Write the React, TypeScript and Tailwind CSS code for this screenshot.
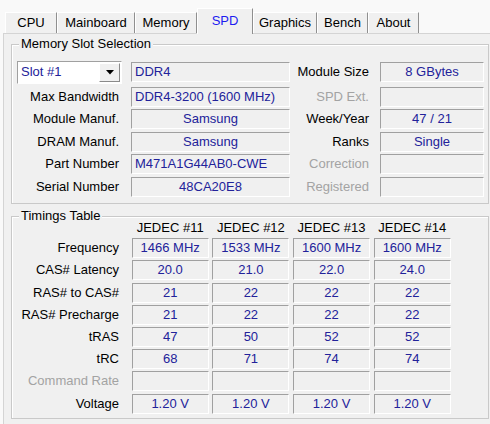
import React from 'react';

const font = { fontFamily: '"Liberation Sans", Arial, sans-serif' };

const tabs = [
  { name: 'CPU', w: 'w-[52px]' },
  { name: 'Mainboard', w: 'w-[78px]' },
  { name: 'Memory', w: 'w-[62px]' },
  { name: 'SPD', w: 'w-[56px]', active: true },
  { name: 'Graphics', w: 'w-[64px]' },
  { name: 'Bench', w: 'w-[51px]' },
  { name: 'About', w: 'w-[51px]' },
];

// sunken value box, CPU-Z style
const Field: React.FC<{ value?: string; align?: 'left' | 'center'; className?: string }> = ({
  value = '',
  align = 'center',
  className = '',
}) => (
  <div
    className={`h-[20px] border border-t-[#a0a0a0] border-l-[#a0a0a0] border-b-white border-r-white bg-[#f0f0f0] text-[13px] leading-[18px] text-[#22229a] whitespace-nowrap overflow-hidden ${
      align === 'left' ? 'text-left pl-[3px]' : 'text-center'
    } ${className}`}
  >
    {value}
  </div>
);

const Label: React.FC<{ text: string; disabled?: boolean; className?: string }> = ({
  text,
  disabled = false,
  className = '',
}) => (
  <div
    className={`h-[20px] text-right text-[13px] leading-[20px] whitespace-nowrap ${
      disabled ? 'text-[#a3a3a3]' : 'text-black'
    } ${className}`}
  >
    {text}
  </div>
);

const GroupBox: React.FC<{ title: string; className?: string; children: React.ReactNode }> = ({
  title,
  className = '',
  children,
}) => (
  <div className={`relative border border-[#c9c9c9] shadow-[inset_1px_1px_0_#ffffff] ${className}`}>
    <span className="absolute -top-[9px] left-[7px] bg-[#f0f0f0] px-[2px] text-[13px] leading-[16px] text-black">
      {title}
    </span>
    {children}
  </div>
);

const slotRows: [string, string, 'left' | 'center', string, string, boolean][] = [
  ['Max Bandwidth', 'DDR4-3200 (1600 MHz)', 'left', 'SPD Ext.', '', true],
  ['Module Manuf.', 'Samsung', 'center', 'Week/Year', '47 / 21', false],
  ['DRAM Manuf.', 'Samsung', 'center', 'Ranks', 'Single', false],
  ['Part Number', 'M471A1G44AB0-CWE', 'left', 'Correction', '', true],
  ['Serial Number', '48CA20E8', 'center', 'Registered', '', true],
];

const timings: { label: string; values: string[]; disabled?: boolean }[] = [
  { label: 'Frequency', values: ['1466 MHz', '1533 MHz', '1600 MHz', '1600 MHz'] },
  { label: 'CAS# Latency', values: ['20.0', '21.0', '22.0', '24.0'] },
  { label: 'RAS# to CAS#', values: ['21', '22', '22', '22'] },
  { label: 'RAS# Precharge', values: ['21', '22', '22', '22'] },
  { label: 'tRAS', values: ['47', '50', '52', '52'] },
  { label: 'tRC', values: ['68', '71', '74', '74'] },
  { label: 'Command Rate', values: ['', '', '', ''], disabled: true },
  { label: 'Voltage', values: ['1.20 V', '1.20 V', '1.20 V', '1.20 V'] },
];

export default function App() {
  return (
    <div className="w-[490px] h-[424px] overflow-hidden bg-[#f9f9f9]" style={font}>
      {/* tab strip */}
      <div className="flex items-end h-[33px] pl-[5px]">
        {tabs.map((t) =>
          t.active ? (
            <div
              key={t.name}
              className={`${t.w} h-[26px] -mb-px relative z-10 bg-[#f0f0f0] border border-b-0 border-l-white border-t-white border-r-[#8f8f8f] text-center text-[13px] leading-[24px] text-[#1c1cf0]`}
            >
              {t.name}
            </div>
          ) : (
            <div
              key={t.name}
              className={`${t.w} h-[21px] bg-[#f0f0f0] border-l border-r border-t border-l-white border-t-white border-r-[#8f8f8f] text-center text-[13px] leading-[20px] text-black`}
            >
              {t.name}
            </div>
          )
        )}
      </div>

      {/* page */}
      <div className="ml-[3px] w-[520px] h-[400px] bg-[#f0f0f0] border border-[#d4d4d4] pl-[7px] pt-[10px]">
        <GroupBox title="Memory Slot Selection" className="w-[478px] h-[160px] pt-[15px] pl-[5px]">
          <div className="grid grid-cols-[114px_159px_90px_104px] gap-y-[2.5px] items-center">
            {/* first row: slot combo + type + module size */}
            <div className="h-[24px] flex items-center">
              <div className="w-[105px] h-[23px] flex items-center border border-t-[#a0a0a0] border-l-[#a0a0a0] border-b-white border-r-white bg-white">
                <span className="flex-1 pl-[3px] text-[13px] text-[#22229a] leading-[20px]">Slot #1</span>
                <div className="w-[21px] h-[19px] mr-px flex items-center justify-center bg-[#f0f0f0] border border-t-white border-l-white border-b-[#8a8a8a] border-r-[#8a8a8a]">
                  <svg width="8" height="5" viewBox="0 0 8 5">
                    <path d="M0 0h8L4 4.5z" fill="#000" />
                  </svg>
                </div>
              </div>
            </div>
            <Field value="DDR4" align="left" />
            <Label text="Module Size" className="pr-[11px]" />
            <Field value="8 GBytes" />

            {slotRows.map(([l, v, a, rl, rv, dis]) => (
              <React.Fragment key={l}>
                <Label text={l} className="pr-[12px]" />
                <Field value={v} align={a} />
                <Label text={rl} disabled={dis} className="pr-[11px]" />
                <Field value={rv} />
              </React.Fragment>
            ))}
          </div>
        </GroupBox>

        <GroupBox title="Timings Table" className="mt-[12px] w-[478px] h-[203px] pt-[3px]">
          <div className="grid grid-cols-[116px_77px_77px_77px_77px] gap-x-[3.7px] gap-y-[2.2px] items-center">
            <div />
            {['JEDEC #11', 'JEDEC #12', 'JEDEC #13', 'JEDEC #14'].map((h) => (
              <div key={h} className="h-[16px] text-center text-[13px] leading-[16px] text-black">
                {h}
              </div>
            ))}
            {timings.map((r) => (
              <React.Fragment key={r.label}>
                <Label text={r.label} disabled={r.disabled} className="pr-[9px]" />
                {r.values.map((v, i) => (
                  <Field key={i} value={v} />
                ))}
              </React.Fragment>
            ))}
          </div>
        </GroupBox>
      </div>
    </div>
  );
}
